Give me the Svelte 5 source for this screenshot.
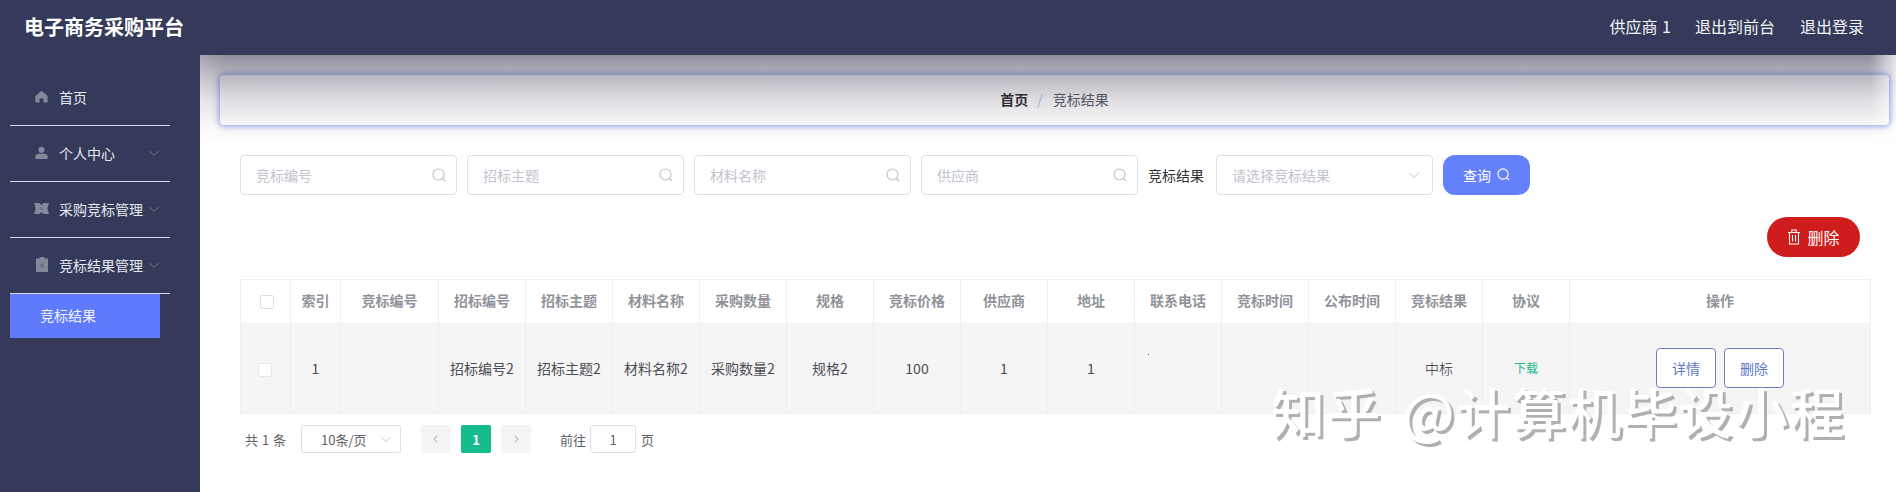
<script lang="ts">
  const searches = ['竞标编号', '招标主题', '材料名称', '供应商'];
  const columns = [
    { label: '索引', width: 50 },
    { label: '竞标编号', width: 98 },
    { label: '招标编号', width: 87 },
    { label: '招标主题', width: 87 },
    { label: '材料名称', width: 87 },
    { label: '采购数量', width: 87 },
    { label: '规格', width: 87 },
    { label: '竞标价格', width: 87 },
    { label: '供应商', width: 87 },
    { label: '地址', width: 87 },
    { label: '联系电话', width: 87 },
    { label: '竞标时间', width: 87 },
    { label: '公布时间', width: 87 },
    { label: '竞标结果', width: 87 },
    { label: '协议', width: 87 },
    { label: '操作', width: 301 },
  ];
  const row = ['1', '', '招标编号2', '招标主题2', '材料名称2', '采购数量2', '规格2', '100', '1', '1'];
</script>

<div class="page">
  <header class="topbar">
    <div class="brand">电子商务采购平台</div>
    <nav class="top-links">
      <span>供应商 1</span>
      <span>退出到前台</span>
      <span class="logout">退出登录</span>
    </nav>
  </header>

  <div class="body">
    <aside class="side">
      <div class="menu-item">
        <svg class="menu-icon" viewBox="0 0 16 16"><path d="M8 1 15.500 7.500v8h-5V10.500h-5v5h-5v-8z" /></svg>
        <span>首页</span>
      </div>
      <div class="menu-item">
        <svg class="menu-icon" viewBox="0 0 16 16"><circle cx="8" cy="4.600" r="3.800" /><path d="M.5 16v-3.400C.5 10.500 2.500 9.400 5 9.400h6c2.500 0 4.500 1.100 4.500 3.200V16z" /></svg>
        <span>个人中心</span>
        <svg class="caret" viewBox="0 0 12 12"><path d="M1.500 4 6 8.500 10.500 4" /></svg>
      </div>
      <div class="menu-item">
        <svg class="menu-icon wide" viewBox="0 0 16 12"><path d="M0 0h6l1 1.500h2L10 0h6l-1.500 6L16 12h-6l-1-1.500H7L6 12H0l1.500-6z" /><path class="cut" d="M6.500 4.500 9.500 7.500M9.500 4.500 6.500 7.500" /></svg>
        <span>采购竞标管理</span>
        <svg class="caret" viewBox="0 0 12 12"><path d="M1.500 4 6 8.500 10.500 4" /></svg>
      </div>
      <div class="menu-item">
        <svg class="menu-icon tall" viewBox="0 0 12 15"><path d="M3.500 0h5v1.500H12V15H0V1.500h3.500z" /><path class="cut" d="M4 6.500 8 10.500M8 6.500 4 10.500" /></svg>
        <span>竞标结果管理</span>
        <svg class="caret" viewBox="0 0 12 12"><path d="M1.500 4 6 8.500 10.500 4" /></svg>
      </div>
      <div class="sub-item">竞标结果</div>
    </aside>

    <main class="main">
      <div class="crumb">
        <b>首页</b>
        <i>/</i>
        <span>竞标结果</span>
      </div>

      <form class="search">
        {#each searches as placeholder}
          <div class="field">
            <span>{placeholder}</span>
            <svg class="field-icon" viewBox="0 0 14 14"><circle cx="6.500" cy="6.500" r="5.500" /><path d="m10.500 10.500 2.500 2.500" /></svg>
          </div>
        {/each}
        <span class="search-label">竞标结果</span>
        <div class="field">
          <span>请选择竞标结果</span>
          <svg class="field-icon chevron" viewBox="0 0 14 14"><path d="M2 4.500 7 9.500 12 4.500" /></svg>
        </div>
        <div class="query">
          查询
          <svg viewBox="0 0 14 14"><circle cx="6.500" cy="6.500" r="5.500" /><path d="m10.500 10.500 2.500 2.500" /></svg>
        </div>
      </form>

      <div class="actions">
        <div class="remove">
          <svg viewBox="0 0 14 16"><path d="M1 3.500h12M4.800 3.500v-2.500h4.400v2.500M2.500 3.500v11.500h9V3.500M5.500 6v6.500M8.500 6v6.500" /></svg>
          删除
        </div>
      </div>

      <table class="grid">
        <colgroup>
          <col style="width: 50px" />
          {#each columns as col}
            <col style="width: {col.width}px" />
          {/each}
        </colgroup>
        <thead>
          <tr>
            <th><span class="check"></span></th>
            {#each columns as col}
              <th>{col.label}</th>
            {/each}
          </tr>
        </thead>
        <tbody>
          <tr>
            <td><span class="check row-check"></span></td>
            {#each row as cell}
              <td>{cell}</td>
            {/each}
            <td class="phone"><span class="speck"></span></td>
            <td></td>
            <td></td>
            <td class="result">中标</td>
            <td class="download">下载</td>
            <td>
              <div class="ops">
                <span>详情</span>
                <span>删除</span>
              </div>
            </td>
          </tr>
        </tbody>
      </table>

      <div class="pager">
        <span class="total">共 1 条</span>
        <div class="size">
          10条/页
          <svg viewBox="0 0 12 12"><path d="M2 4.500 6 8.500 10 4.500" /></svg>
        </div>
        <div class="page-btn">
          <svg viewBox="0 0 12 12"><path d="M7.500 2.500 4 6l3.500 3.500" /></svg>
        </div>
        <div class="page-btn current">1</div>
        <div class="page-btn">
          <svg viewBox="0 0 12 12"><path d="M4.500 2.500 8 6l-3.500 3.500" /></svg>
        </div>
        <span class="jump">前往</span>
        <div class="jump-input">1</div>
        <span class="jump-unit">页</span>
      </div>

      <div class="shade"></div>
    </main>
  </div>

  <div class="watermark">知乎 @计算机毕设小程</div>
</div>

<style>
  :global(body) {
    margin: 0;
    overflow: hidden;
    background: #fff;
  }
  .page {
    position: relative;
    width: 1896px;
    height: 492px;
    overflow: hidden;
    font-family: 'Noto Sans CJK SC', 'Liberation Sans', sans-serif;
    font-size: 14px;
    color: #606266;
  }
  .topbar {
    height: 55px;
    padding: 0 32px 3px 24px;
    box-sizing: border-box;
    display: flex;
    align-items: center;
    justify-content: space-between;
    background: #353a5b;
    color: #fff;
  }
  .brand {
    font-size: 20px;
    font-weight: 700;
  }
  .top-links {
    display: flex;
    gap: 24px;
    margin-bottom: 1px;
    font-size: 16px;
    word-spacing: 1px;
    color: #f3f4f8;
  }
  .logout {
    margin-left: 1px;
  }
  .body {
    display: flex;
    height: 437px;
  }
  .side {
    width: 200px;
    flex: none;
    box-sizing: border-box;
    padding: 15px 30px 0 10px;
    background: #353a5b;
  }
  .menu-item {
    height: 56px;
    box-sizing: border-box;
    display: flex;
    align-items: center;
    padding: 0 0 2px 25px;
    border-bottom: 1px solid #d9dcef;
    color: #e6e8f0;
  }
  .menu-icon {
    width: 13px;
    height: 13px;
    margin-right: 11px;
    flex: none;
    fill: #84889a;
  }
  .menu-icon.wide {
    width: 15px;
    height: 11px;
    margin-left: -1px;
    margin-right: 10px;
  }
  .menu-icon.tall {
    width: 12px;
    height: 15px;
    margin-left: 1px;
    margin-right: 11px;
  }
  .cut {
    fill: none;
    stroke: #5a5e75;
    stroke-width: 1;
  }
  .caret {
    width: 12px;
    height: 12px;
    margin-left: auto;
    margin-right: 10px;
    flex: none;
    fill: none;
    stroke: #6f7389;
    stroke-width: 1;
  }
  .sub-item {
    width: 150px;
    height: 44px;
    box-sizing: border-box;
    padding: 0 0 2px 30px;
    display: flex;
    align-items: center;
    background: #5f7bfb;
    color: #f4f6ff;
  }
  .main {
    position: relative;
    flex: 1;
    min-width: 0;
    background: #fff;
  }
  .crumb {
    position: relative;
    height: 50px;
    box-sizing: border-box;
    margin: 20px 7px 0 20px;
    padding-bottom: 3px;
    display: flex;
    align-items: center;
    justify-content: center;
    border-radius: 4px;
    background: #fff;
    box-shadow: 0 0 6px 1px rgba(95, 115, 235, 0.7);
    color: #5b5e66;
  }
  .crumb b {
    color: #303133;
    font-weight: 700;
  }
  .crumb i {
    margin: 0 10px 0 9px;
    color: #c0c4cc;
    font-style: normal;
  }
  .search {
    display: flex;
    align-items: center;
    gap: 10px;
    margin: 30px 0 0 40px;
  }
  .field {
    width: 217px;
    height: 40px;
    box-sizing: border-box;
    display: flex;
    align-items: center;
    justify-content: space-between;
    padding: 0 10px 1px 15px;
    border: 1px solid #dcdfe6;
    border-radius: 4px;
    background: #fff;
    color: #c0c4cc;
  }
  .field-icon {
    width: 14px;
    height: 14px;
    fill: none;
    stroke: #c0c4cc;
    stroke-width: 1.200;
  }
  .chevron {
    margin-right: 1px;
    stroke-width: 1;
  }
  .search-label {
    width: 56px;
    margin: 0 2px 1px 0;
    color: #303133;
    white-space: nowrap;
  }
  .query {
    width: 87px;
    height: 40px;
    box-sizing: border-box;
    padding-bottom: 1px;
    display: flex;
    align-items: center;
    justify-content: center;
    gap: 6px;
    border-radius: 12px;
    background: #6580fb;
    color: #fff;
  }
  .query svg {
    width: 13px;
    height: 13px;
    fill: none;
    stroke: #fff;
    stroke-width: 1.200;
  }
  .actions {
    display: flex;
    justify-content: flex-end;
    margin: 22px 36px 0 0;
  }
  .remove {
    width: 93px;
    height: 40px;
    box-sizing: border-box;
    padding-bottom: 1px;
    display: flex;
    align-items: center;
    justify-content: center;
    gap: 6px;
    border-radius: 20px;
    background: #cf1c1c;
    font-size: 16px;
    color: #fff;
  }
  .remove svg {
    width: 14px;
    height: 16px;
    fill: none;
    stroke: #fff;
    stroke-width: 1.100;
  }
  .grid {
    width: 1630px;
    margin: 22px 0 0 40px;
    table-layout: fixed;
    border-collapse: collapse;
    border: 1px solid #ebeef5;
  }
  .grid th,
  .grid td {
    box-sizing: border-box;
    padding: 0;
    border-right: 1px solid #ebeef5;
    text-align: center;
  }
  .grid th {
    height: 43px;
    padding-bottom: 2px;
    color: #909399;
    font-weight: 700;
    background: #fff;
  }
  .grid td {
    height: 91px;
    background: #f5f5f5;
    border-bottom: 1px solid #ebeef5;
    color: #4a4d53;
  }
  .check {
    display: inline-block;
    width: 14px;
    height: 14px;
    box-sizing: border-box;
    margin-left: 2px;
    vertical-align: middle;
    border: 1px solid #dcdfe6;
    border-radius: 2px;
    background: #fff;
  }
  .row-check {
    margin-left: -2px;
    border-color: #e4e7ed;
  }
  .phone {
    position: relative;
  }
  .speck {
    position: absolute;
    left: 13px;
    top: 31px;
    width: 1px;
    height: 1px;
    background: #555;
  }
  .grid .result {
    color: #303133;
    font-weight: 300;
  }
  .grid .download {
    font-size: 12px;
    color: #19b98b;
  }
  .ops {
    display: flex;
    justify-content: center;
    gap: 8px;
  }
  .ops span {
    width: 60px;
    height: 40px;
    box-sizing: border-box;
    display: flex;
    align-items: center;
    justify-content: center;
    border: 1px solid #6f7fc0;
    border-radius: 4px;
    background: #fff;
    color: #5f78c8;
  }
  .pager {
    display: flex;
    align-items: center;
    height: 28px;
    margin: 11px 0 0 45px;
    font-size: 13px;
    color: #606266;
  }
  .total {
    width: 56px;
    white-space: nowrap;
    word-spacing: 1px;
  }
  .size {
    width: 100px;
    height: 28px;
    box-sizing: border-box;
    display: flex;
    align-items: center;
    justify-content: space-between;
    padding: 0 8px 0 19px;
    border: 1px solid #dcdfe6;
    border-radius: 3px;
    margin-right: 20px;
  }
  .size svg {
    width: 12px;
    height: 12px;
    fill: none;
    stroke: #c0c4cc;
  }
  .page-btn {
    width: 30px;
    height: 28px;
    margin-right: 10px;
    display: flex;
    align-items: center;
    justify-content: center;
    border-radius: 2px;
    background: #f4f4f5;
    font-weight: 700;
  }
  .page-btn svg {
    width: 12px;
    height: 12px;
    fill: none;
    stroke: #c0c4cc;
    stroke-width: 1.300;
  }
  .page-btn.current {
    background: #16bb8c;
    color: #fff;
  }
  .jump {
    margin-left: 19px;
    width: 30px;
    white-space: nowrap;
  }
  .jump-input {
    width: 46px;
    height: 28px;
    box-sizing: border-box;
    display: flex;
    align-items: center;
    justify-content: center;
    border: 1px solid #dcdfe6;
    border-radius: 3px;
    margin-right: 5px;
  }
  .shade {
    position: absolute;
    top: 0;
    left: 0;
    right: 0;
    height: 90px;
    pointer-events: none;
    background: linear-gradient(
      rgba(40, 40, 66, 0.52),
      rgba(40, 40, 66, 0.34) 20px,
      rgba(40, 40, 66, 0.15) 45px,
      rgba(40, 40, 66, 0.04) 70px,
      rgba(40, 40, 66, 0)
    );
    mask-image: linear-gradient(90deg, rgba(0, 0, 0, 0.8), #000 24px, #000 calc(100% - 26px), rgba(0, 0, 0, 0.25));
  }
  .watermark {
    position: absolute;
    left: 1271px;
    top: 375px;
    font-size: 54px;
    font-weight: 500;
    line-height: 72px;
    letter-spacing: 1.600px;
    word-spacing: 6px;
    white-space: nowrap;
    color: #fff;
    text-shadow: 3px 3px 0 #b0b0b0;
    pointer-events: none;
  }
</style>
